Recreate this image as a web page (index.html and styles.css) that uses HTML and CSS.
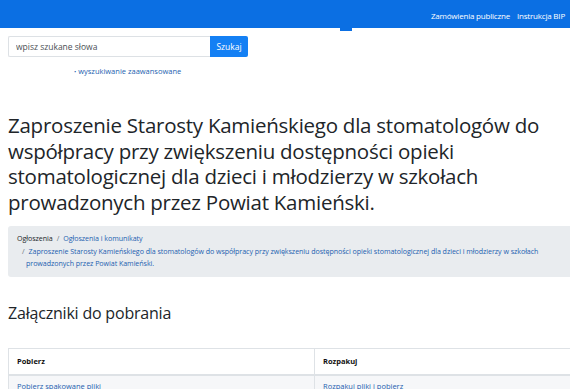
FILE: index.html
```html
<!DOCTYPE html>
<html lang="pl">
<head>
<meta charset="utf-8">
<title>BIP</title>
<link rel="stylesheet" href="styles.css">
</head>
<body>
<header class="topbar">
  <span class="blip"></span>
  <nav class="topnav">
    <a href="#">Zamówienia publiczne</a>
    <a href="#">Instrukcja BIP</a>
  </nav>
</header>
<main class="page">
  <form class="search">
    <input class="search-input" type="text" placeholder="wpisz szukane słowa">
    <button class="search-btn" type="button">Szukaj</button>
  </form>
  <div class="advanced"><span class="bullet">•</span> <a href="#">wyszukiwanie zaawansowane</a></div>

  <h1 class="title">Zaproszenie Starosty Kamieńskiego dla stomatologów do współpracy przy zwiększeniu dostępności opieki stomatologicznej dla dzieci i młodzierzy w szkołach prowadzonych przez Powiat Kamieński.</h1>

  <div class="crumbs">
    <div class="crumb-row"><span class="crumb-first">Ogłoszenia</span><span class="sep">/</span><a href="#">Ogłoszenia i komunikaty</a></div>
    <div class="crumb-last"><span class="sep sep-first">/</span><a href="#">Zaproszenie Starosty Kamieńskiego dla stomatologów do współpracy przy zwiększeniu dostępności opieki stomatologicznej dla dzieci i młodzierzy w szkołach prowadzonych przez Powiat Kamieński.</a></div>
  </div>

  <h2 class="subtitle">Załączniki do pobrania</h2>

  <table class="files">
    <thead>
      <tr><th class="col1">Pobierz</th><th>Rozpakuj</th></tr>
    </thead>
    <tbody>
      <tr><td><a href="#">Pobierz spakowane pliki</a></td><td><a href="#">Rozpakuj pliki i pobierz</a></td></tr>
    </tbody>
  </table>
</main>
</body>
</html>
```

FILE: styles.css
```css
html, body {
  margin: 0;
  padding: 0;
  background: #fff;
  overflow: hidden;
}
body {
  font-family: "Open Sans", "Noto Sans", sans-serif;
  color: #212529;
  width: 570px;
  height: 389px;
}
a { color: #1d5fb0; text-decoration: none; }

.topbar {
  height: 28px;
  background: #0b6fe3;
  display: flex;
  align-items: center;
  justify-content: flex-end;
  position: relative;
}
.blip {
  position: absolute;
  left: 340px;
  top: 27px;
  width: 12px;
  height: 4px;
  background: #0b6fe3;
}
.topnav {
  display: flex;
  gap: 7px;
  padding-right: 5px;
  padding-top: 2px;
}
.topnav a {
  color: #fff;
  font-size: 8px;
  letter-spacing: -0.2px;
}

.page {
  padding: 0 0 0 8px;
}

.search {
  display: flex;
  margin-top: 8px;
  width: 240px;
}
.search-input {
  flex: 1;
  height: 21px;
  box-sizing: border-box;
  border: 1px solid #dde1e5;
  border-right: none;
  border-radius: 2px 0 0 2px;
  padding: 0 7px;
  font-family: inherit;
  font-size: 8.5px;
  color: #495057;
}
.search-input::placeholder { color: #4a4f55; }
.search-btn {
  width: 38px;
  height: 21px;
  border: none;
  border-radius: 0 2px 2px 0;
  background: #1480f4;
  color: #fff;
  font-family: inherit;
  font-size: 8.5px;
  padding: 0;
}

.advanced {
  margin: 9px 0 0 66px;
  font-size: 7.5px;
  line-height: 10px;
}
.advanced .bullet { color: #1d5fb0; font-size: 6px; }

.title {
  font-weight: 400;
  font-size: 20.5px;
  line-height: 25.5px;
  margin: 36px 8px 0 0;
  letter-spacing: -0.25px;
  color: #212529;
}

.crumbs {
  margin-top: 11px;
  background: #e9ecef;
  border-radius: 3px 0 0 3px;
  padding: 6px 4px 7px 9px;
  font-size: 7.1px;
  line-height: 12.5px;
  margin-right: -20px;
  letter-spacing: -0.05px;
}
.crumb-first { color: #212529; }
.sep { color: #6c757d; padding: 0 4px; }
.crumb-last {
  padding-left: 9px;
  padding-right: 24px;
  text-indent: -4px;
}
.sep-first { padding-left: 0; }

.subtitle {
  font-weight: 400;
  font-size: 16px;
  margin: 25px 0 0;
  line-height: 22px;
  letter-spacing: -0.2px;
}

.files {
  margin-top: 24px;
  width: 600px;
  border-collapse: collapse;
  font-size: 7.5px;
}
.files th, .files td {
  text-align: left;
  border: 1px solid #dee2e6;
  padding: 0 8px;
}
.files th {
  height: 25px;
  font-weight: 700;
  color: #111;
  border-bottom-width: 2px;
}
.files .col1 { width: 289px; }
.files td {
  height: 20px;
  background: #f6f7f9;
}
```
